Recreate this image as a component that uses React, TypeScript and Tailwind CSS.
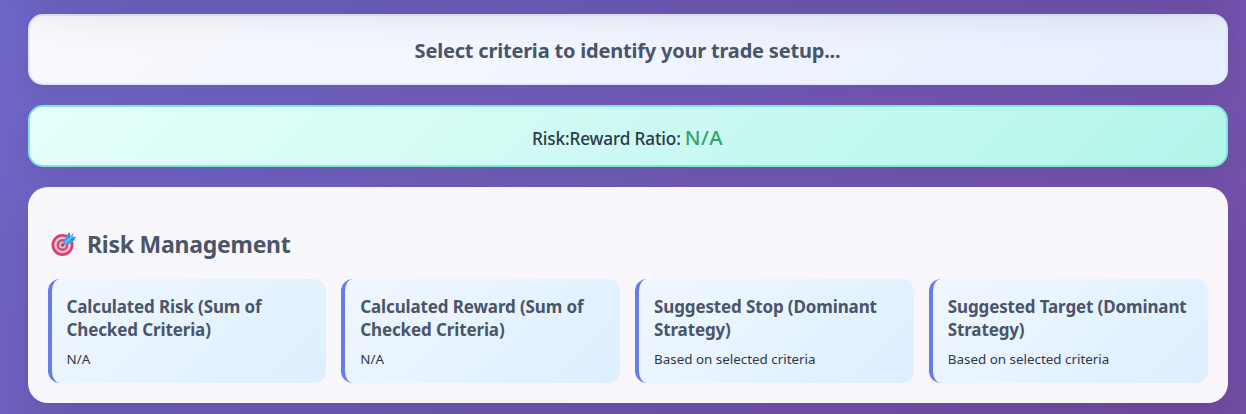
const cards = [
  { title: ["Calculated Risk (Sum of", "Checked Criteria)"], value: "N/A" },
  { title: ["Calculated Reward (Sum of", "Checked Criteria)"], value: "N/A" },
  { title: ["Suggested Stop (Dominant", "Strategy)"], value: "Based on selected criteria" },
  { title: ["Suggested Target (Dominant", "Strategy)"], value: "Based on selected criteria" },
];

function TargetIcon() {
  return (
    <svg width="26" height="26" viewBox="0 0 26 26" className="shrink-0" aria-hidden="true">
      <circle cx="11.5" cy="14" r="11" fill="#e23d68" />
      <circle cx="11.5" cy="14" r="8.3" fill="#d3cadb" />
      <circle cx="11.5" cy="14" r="5.9" fill="#df4770" />
      <circle cx="11.5" cy="14" r="3.5" fill="#cfc4d6" />
      <circle cx="11.5" cy="14" r="1.8" fill="#a94b76" />
      <path d="M11.8 14 L16 9.8" stroke="#76678e" strokeWidth="2" />
      <path d="M12.8 9.2 L18 1.2 L19.2 5 L22.4 2 L21.4 5.8 L25.5 6 L19.4 12.6 L13.6 13 Z" fill="#379df0" />
      <path d="M14 12.2 L22 4.4" stroke="#62c8fb" strokeWidth="1.8" />
      <path d="M18.3 2 V6.5 M20 8.9 H23.8" stroke="#2480d8" strokeWidth="1.1" />
    </svg>
  );
}

export default function App() {
  return (
    <main className="relative h-[414px] overflow-hidden bg-[linear-gradient(135deg,#6e67c8_0%,#754da6_100%)] pt-[14px] pr-[18.5px] pl-[27.5px] font-['Noto_Sans','Open_Sans',sans-serif] text-[#2d3748]">
      <section className="flex h-[71px] items-center justify-center rounded-[15px] border-2 border-[#e0e7ff] bg-[linear-gradient(135deg,#f9f9fd_0%,#f2f6ff_40%,#e7eefe_100%)] pt-[3px] shadow-[0_8px_25px_rgba(0,0,0,0.08)]">
        <p className="text-[20px] font-bold tracking-[-0.2px] whitespace-nowrap text-[#4a5568]">Select criteria to identify your trade setup...</p>
      </section>
      <section className="mt-5 flex h-[62px] items-center justify-center rounded-[15px] border-2 border-[#81e6d9] bg-[linear-gradient(135deg,#e6fffa_0%,#b2f5ea_100%)] pt-[3px] shadow-[0_8px_25px_rgba(0,0,0,0.08)]">
        <p className="flex items-baseline gap-1 text-[17.2px] font-medium tracking-[-0.15px] whitespace-nowrap">
          <span>Risk:Reward Ratio:</span>
          <span className="text-[20.4px] tracking-[0.4px] text-[#38a169]">N/A</span>
        </p>
      </section>
      <section className="mt-5 h-[216px] rounded-[20px] bg-white/95 px-5 pt-10 shadow-[0_20px_40px_rgba(0,0,0,0.1)]">
        <h2 className="flex h-[34px] items-center gap-[10px] pl-[3.5px] text-[23px] font-bold text-[#4a5568]">
          <TargetIcon />
          <span className="tracking-[-0.25px] whitespace-nowrap">Risk Management</span>
        </h2>
        <div className="mt-[18px] grid grid-cols-4 gap-[15px]">
          {cards.map((card) => (
            <article key={card.title[0]} className="h-[104px] rounded-xl border-l-4 border-[#667eea] bg-[linear-gradient(135deg,#f0f7ff_0%,#ddefff_100%)] px-[15px] pt-4">
              <h3 className="text-[17px] leading-[23px] font-bold tracking-[-0.13px] whitespace-nowrap text-[#4a5568]">
                {card.title.map((line) => <span key={line} className="block">{line}</span>)}
              </h3>
              <p className="mt-2 text-[13.4px] leading-5 whitespace-nowrap">{card.value}</p>
            </article>
          ))}
        </div>
      </section>
      <div className="pointer-events-none absolute -top-[206px] right-[18.5px] left-[27.5px] h-[200px] rounded-[20px] shadow-[0_20px_40px_rgba(0,0,0,0.1)]" />
    </main>
  );
}
